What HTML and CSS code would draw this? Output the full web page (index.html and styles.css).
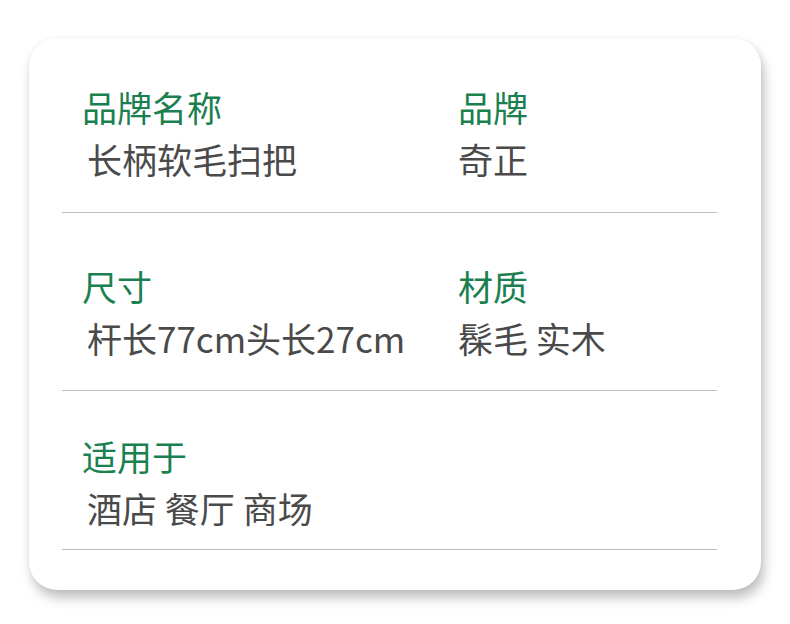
FILE: index.html
```html
<!DOCTYPE html>
<html lang="zh">
<head>
<meta charset="utf-8">
<link rel="stylesheet" href="styles.css">
</head>
<body>
<div class="card">
  <div class="row row-1">
    <div class="cell">
      <div class="label">品牌名称</div>
      <div class="value value-first">长柄软毛扫把</div>
    </div>
    <div class="cell">
      <div class="label">品牌</div>
      <div class="value">奇正</div>
    </div>
  </div>
  <div class="row row-2">
    <div class="cell">
      <div class="label">尺寸</div>
      <div class="value value-first">杆长77cm头长27cm</div>
    </div>
    <div class="cell">
      <div class="label">材质</div>
      <div class="value">髹毛 实木</div>
    </div>
  </div>
  <div class="row row-3">
    <div class="cell">
      <div class="label">适用于</div>
      <div class="value value-first">酒店 餐厅 商场</div>
    </div>
  </div>
</div>
</body>
</html>
```

FILE: styles.css
```css
html, body {
  margin: 0;
  padding: 0;
  background: #ffffff;
}
body {
  width: 790px;
  height: 624px;
  overflow: hidden;
  font-family: "Noto Sans CJK SC", "Noto Sans", sans-serif;
}
.card {
  margin: 38px 0 0 29px;
  width: 732px;
  height: 552px;
  box-sizing: border-box;
  background: #ffffff;
  border-radius: 28px;
  box-shadow: 3px 8px 12px rgba(0, 0, 0, 0.25), 0 0 4px rgba(0, 0, 0, 0.05);
  padding: 0 44px 0 33px;
}
.row {
  display: grid;
  grid-template-columns: 376px 1fr;
  border-bottom: 1px solid #bdbdbd;
  padding-left: 20px;
}
.row-1 { padding-top: 43px; padding-bottom: 27px; }
.row-2 { padding-top: 47px; padding-bottom: 26px; }
.row-3 { padding-top: 39px; padding-bottom: 15px; }
.cell {
  display: flex;
  flex-direction: column;
}
.label {
  color: #1a8050;
  font-size: 35px;
  line-height: 52px;
  white-space: nowrap;
}
.value {
  color: #4a4a4a;
  font-size: 35px;
  line-height: 52px;
  white-space: nowrap;
}
.value-first {
  padding-left: 5px;
}
```
